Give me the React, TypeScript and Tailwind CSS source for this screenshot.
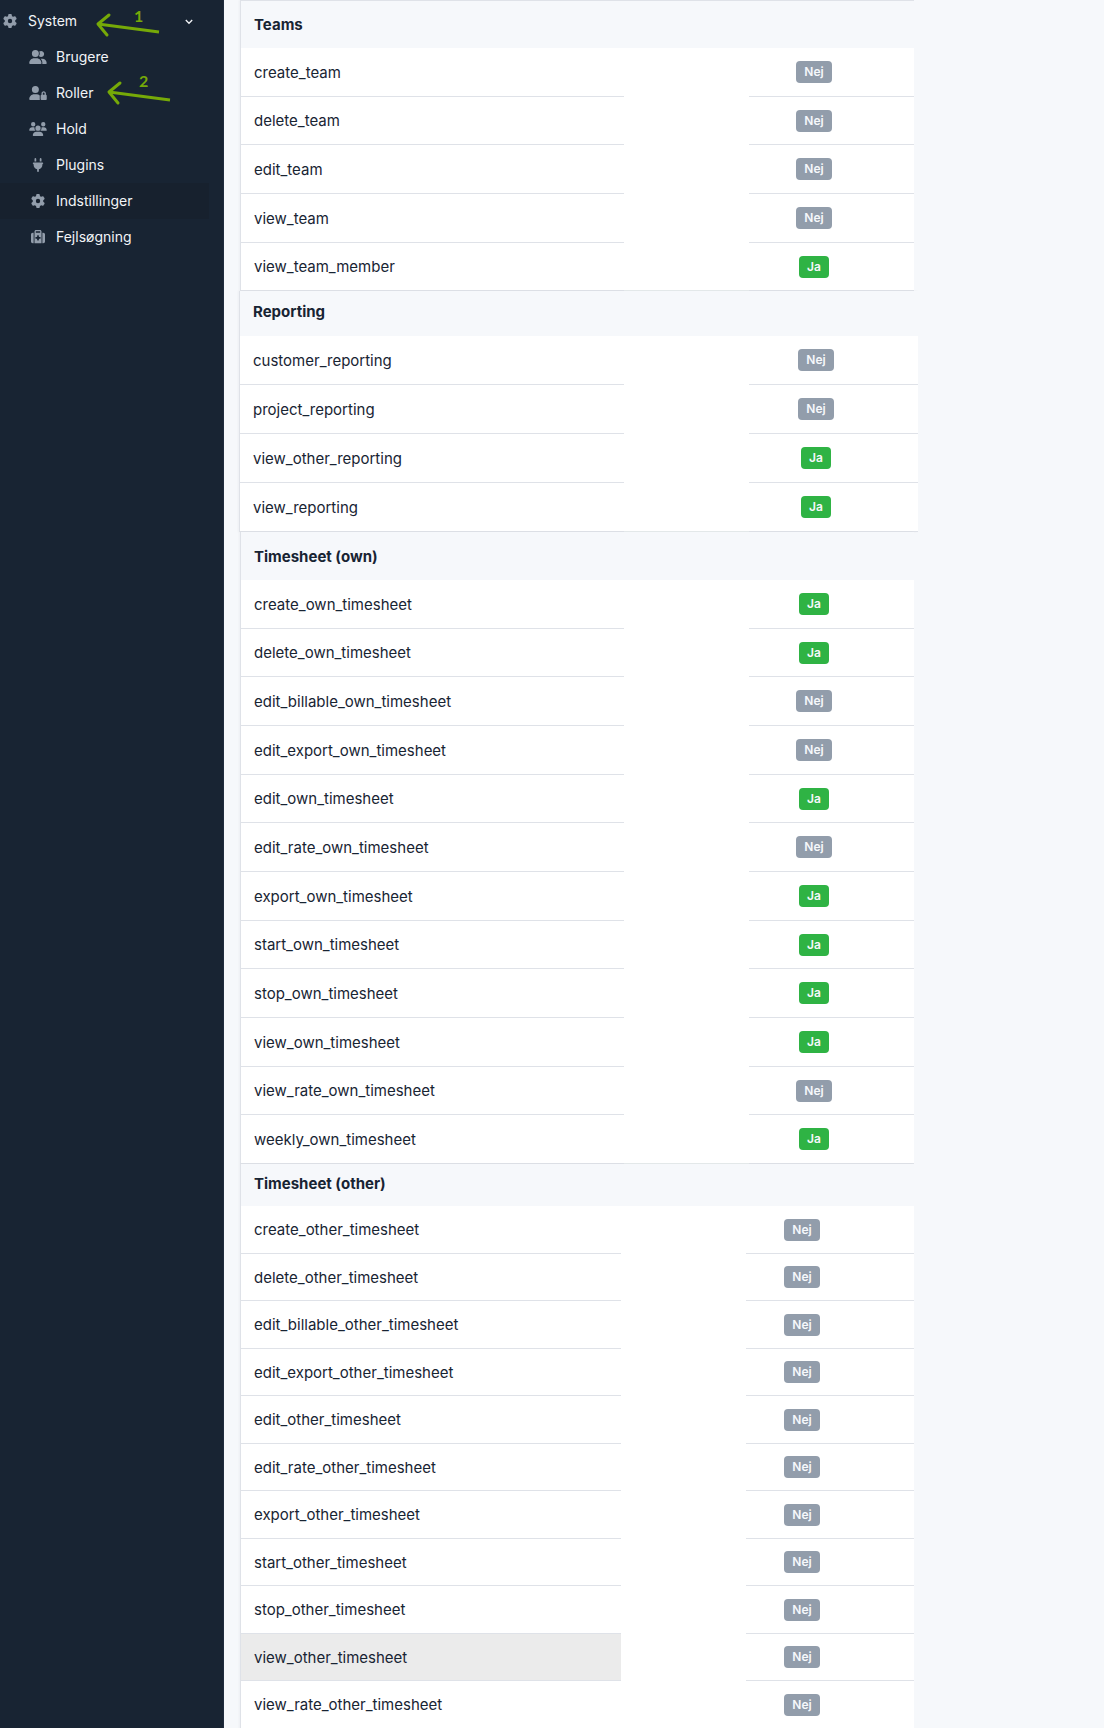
import type { IconType } from "react-icons";
import { FaGear, FaPlug, FaSuitcaseMedical, FaUserGroup, FaUserLock, FaUsers } from "react-icons/fa6";

type Permission = [name: string, allowed: boolean];

type Section = {
  title: string;
  frame: string;
  header: string;
  rows: string;
  nameCol: string;
  badgeCell: string;
  permissions: Permission[];
};

const sections: Section[] = [
  {
    title: "Teams",
    frame: "ml-px mr-1 border-t",
    header: "h-[47px]",
    rows: "h-[49px] [&:nth-child(3n+2)]:h-[48px]",
    nameCol: "w-[383px]",
    badgeCell: "pr-[35px]",
    permissions: [
      ["create_team", false],
      ["delete_team", false],
      ["edit_team", false],
      ["view_team", false],
      ["view_team_member", true],
    ],
  },
  {
    title: "Reporting",
    frame: "",
    header: "h-[45px] [&>th]:pb-[3px]",
    rows: "h-[49px]",
    nameCol: "w-[384px]",
    badgeCell: "pr-[35px]",
    permissions: [
      ["customer_reporting", false],
      ["project_reporting", false],
      ["view_other_reporting", true],
      ["view_reporting", true],
    ],
  },
  {
    title: "Timesheet (own)",
    frame: "ml-px mr-1",
    header: "h-[48px] [&>th]:pt-[2px]",
    rows: "h-[49px] [&:nth-child(3n+2)]:h-[48px]",
    nameCol: "w-[383px]",
    badgeCell: "pr-[35px]",
    permissions: [
      ["create_own_timesheet", true],
      ["delete_own_timesheet", true],
      ["edit_billable_own_timesheet", false],
      ["edit_export_own_timesheet", false],
      ["edit_own_timesheet", true],
      ["edit_rate_own_timesheet", false],
      ["export_own_timesheet", true],
      ["start_own_timesheet", true],
      ["stop_own_timesheet", true],
      ["view_own_timesheet", true],
      ["view_rate_own_timesheet", false],
      ["weekly_own_timesheet", true],
    ],
  },
  {
    title: "Timesheet (other)",
    frame: "ml-px mr-1",
    header: "h-[42px] [&>th]:pb-[3px]",
    rows: "h-[47px] odd:h-[48px] last:h-[47px]",
    nameCol: "w-[380px]",
    badgeCell: "pr-[56px]",
    permissions: [
      ["create_other_timesheet", false],
      ["delete_other_timesheet", false],
      ["edit_billable_other_timesheet", false],
      ["edit_export_other_timesheet", false],
      ["edit_other_timesheet", false],
      ["edit_rate_other_timesheet", false],
      ["export_other_timesheet", false],
      ["start_other_timesheet", false],
      ["stop_other_timesheet", false],
      ["view_other_timesheet", false],
      ["view_rate_other_timesheet", false],
    ],
  },
];

const navItems: { label: string; icon: IconType; wide?: boolean }[] = [
  { label: "Brugere", icon: FaUserGroup, wide: true },
  { label: "Roller", icon: FaUserLock, wide: true },
  { label: "Hold", icon: FaUsers, wide: true },
  { label: "Plugins", icon: FaPlug },
  { label: "Indstillinger", icon: FaGear },
  { label: "Fejlsøgning", icon: FaSuitcaseMedical },
];

const highlighted = "view_other_timesheet";

function Pointer({ label, className, labelClass }: { label: string; className: string; labelClass: string }) {
  return (
    <div className={"pointer-events-none absolute h-9 w-[68px] text-[#76a908] " + className} aria-hidden="true">
      <svg viewBox="0 0 68 36" className="size-full" fill="none" stroke="currentColor" strokeWidth="3">
        <path d="M15 7 4 16 13 27" strokeLinecap="round" strokeLinejoin="round" />
        <path d="M4 16 65 24" />
      </svg>
      <span className={"absolute font-[Lato] text-base font-bold leading-4 " + labelClass}>{label}</span>
    </div>
  );
}

function Sidebar() {
  return (
    <nav className="relative w-56 shrink-0 border-r border-[#202c3d] bg-[#182433] pt-[3px] text-sm text-[#f2f4f7]" aria-label="System">
      <button type="button" className="flex h-9 w-full items-center pl-[3px] pr-[30px]">
        <FaGear className="size-[14px] text-[#929dab]" />
        <span className="ml-[11px]">System</span>
        <svg viewBox="0 0 8 6" className="ml-auto mt-px h-[6px] w-2" fill="none" stroke="currentColor" strokeWidth="1.3">
          <path d="M.8 1 4 4.3 7.2 1" />
        </svg>
      </button>
      <ul>
        {navItems.map(({ label, icon: Icon, wide }) => (
          <li key={label}>
            <a
              href="#"
              className={
                "mr-[14px] flex h-9 items-center pl-[29px] " + (label === "Indstillinger" ? "bg-[#17212e]" : "")
              }
            >
              <span className="flex w-[18px] justify-center text-[#929dab]">
                <Icon className={wide ? "h-[14px] w-[18px]" : "size-[14px]"} />
              </span>
              <span className="ml-[9px]">{label}</span>
            </a>
          </li>
        ))}
      </ul>
      <Pointer label="1" className="left-[94px] top-2" labelClass="left-10 top-0" />
      <Pointer label="2" className="left-[105px] top-[76px]" labelClass="left-[34px] -top-[3px]" />
    </nav>
  );
}

function PermissionTable({ section }: { section: Section }) {
  return (
    <table
      className={
        "table-fixed border-separate border-spacing-0 border-l border-[#dfe2e8] bg-white text-left shadow-[-1px_0_2px_rgba(24,36,51,0.04)] " +
        section.frame
      }
    >
      <colgroup>
        <col className={section.nameCol} />
        <col className="w-[125px]" />
        <col />
      </colgroup>
      <thead>
        <tr className={section.header}>
          <th colSpan={3} scope="colgroup" className="bg-[#f6f8fb] px-[13px] font-bold">
            {section.title}
          </th>
        </tr>
      </thead>
      <tbody>
        {section.permissions.map(([name, allowed]) => (
          <tr key={name} className={"group " + section.rows}>
            <th
              scope="row"
              className={
                "border-b border-[#dfe2e8] px-[13px] pt-px font-normal " + (name === highlighted ? "bg-[#ebebeb]" : "")
              }
            >
              {name}
            </th>
            <td className="border-[#e6ebec] group-last:border-b" />
            <td className={"border-b border-[#dfe2e8] text-center " + section.badgeCell}>
              <span
                className={
                  "inline-block h-[22px] rounded px-2 align-middle text-xs font-semibold leading-[22px] text-[#f6f8fb] " +
                  (allowed ? "bg-[#2fb344]" : "bg-[#929dab]")
                }
              >
                {allowed ? "Ja" : "Nej"}
              </span>
            </td>
          </tr>
        ))}
      </tbody>
    </table>
  );
}

export default function App() {
  return (
    <div className="flex min-h-screen bg-[#f6f8fb] font-[Inter,sans-serif] text-[#182433]">
      <Sidebar />
      <main className="flex min-w-0 flex-1 flex-col pl-[15px] pr-[186px] text-[15px] leading-5">
        {sections.map((section) => (
          <PermissionTable key={section.title} section={section} />
        ))}
      </main>
    </div>
  );
}
